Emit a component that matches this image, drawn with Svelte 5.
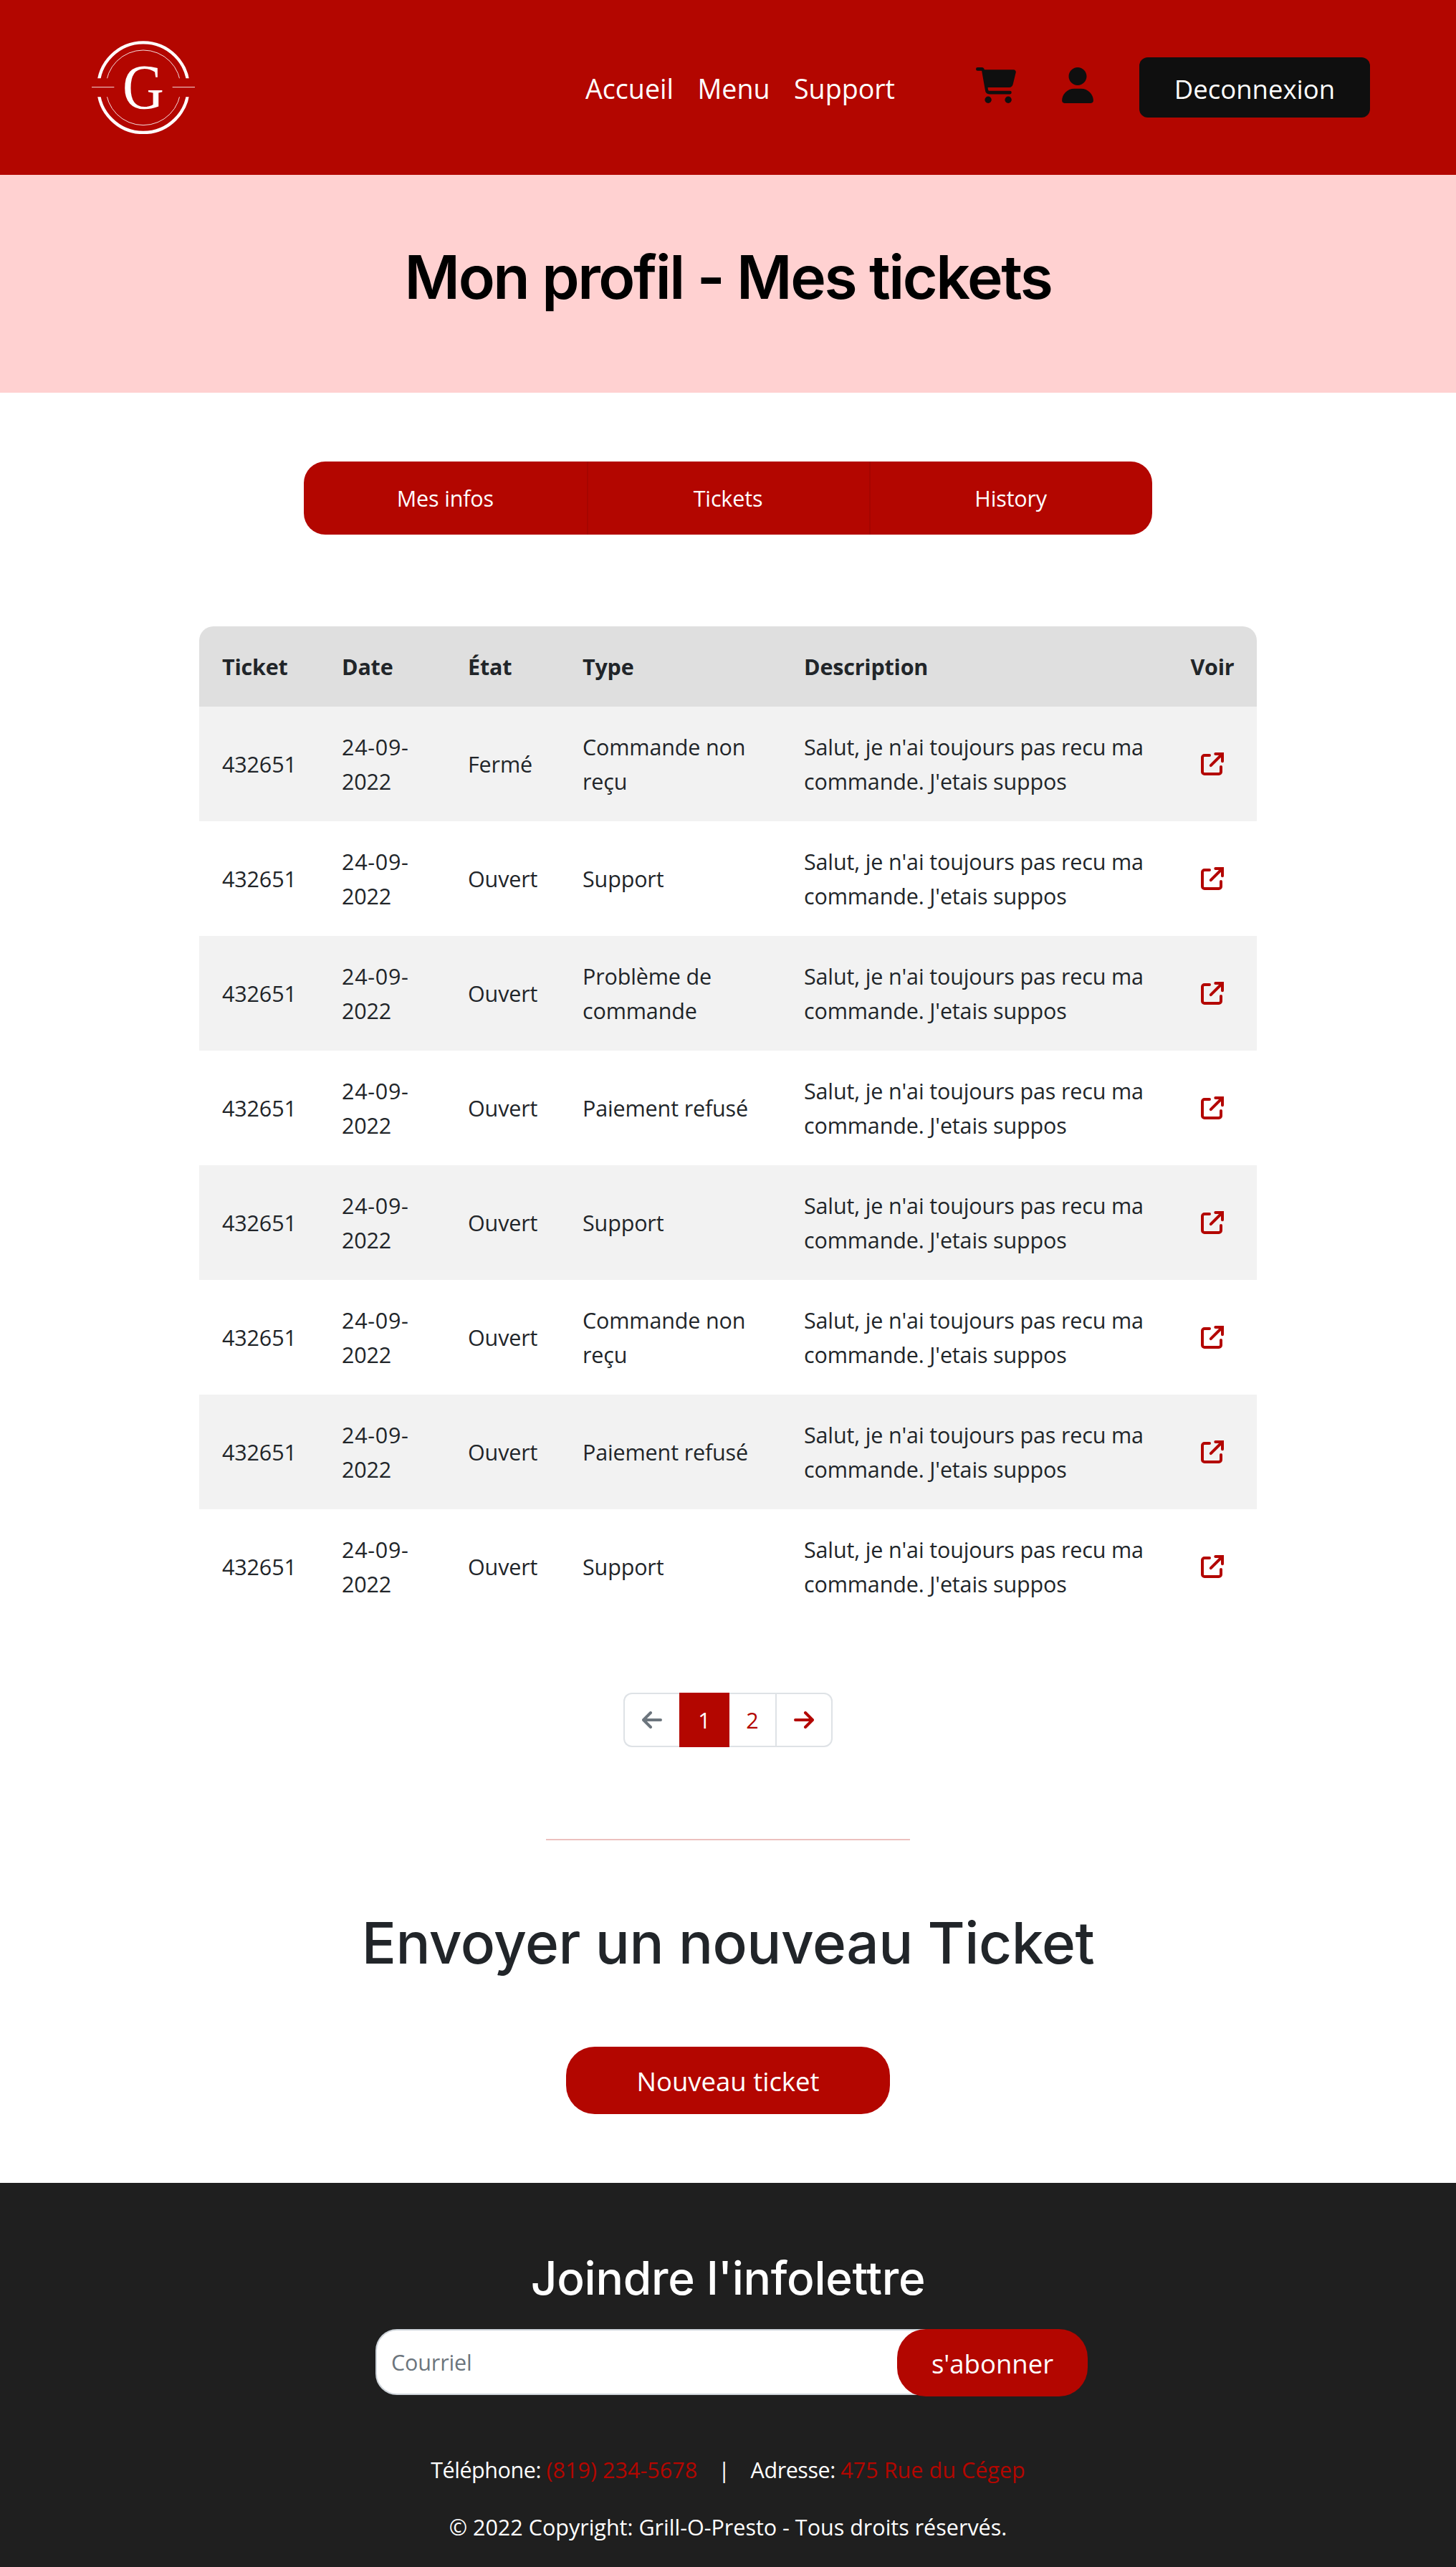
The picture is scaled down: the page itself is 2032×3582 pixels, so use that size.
<script>
  const nav = ['Accueil', 'Menu', 'Support'];
  const tabs = ['Mes infos', 'Tickets', 'History'];
  const description = "Salut, je n'ai toujours pas recu ma\ncommande. J'etais suppos";
  const tickets = [
    { state: 'Fermé', type: 'Commande non\nreçu' },
    { state: 'Ouvert', type: 'Support' },
    { state: 'Ouvert', type: 'Problème de\ncommande' },
    { state: 'Ouvert', type: 'Paiement refusé' },
    { state: 'Ouvert', type: 'Support' },
    { state: 'Ouvert', type: 'Commande non\nreçu' },
    { state: 'Ouvert', type: 'Paiement refusé' },
    { state: 'Ouvert', type: 'Support' }
  ].map((t) => ({ id: '432651', date: '24-09-\n2022', ...t }));
</script>

<header class="topbar">
  <svg class="logo" viewBox="84 80 432 391" aria-label="Grill-O-Presto">
    <defs>
      <clipPath id="ring-halves">
        <rect x="84" y="70" width="432" height="167" />
        <rect x="84" y="315" width="432" height="170" />
      </clipPath>
    </defs>
    <g clip-path="url(#ring-halves)" fill="none" stroke="#fff">
      <circle cx="300" cy="275.7" r="188.5" stroke-width="13" />
      <circle cx="300" cy="276" r="157" stroke-width="2.6" />
    </g>
    <path d="M84 274H178M422 274H516" stroke="#fff" stroke-width="2.6" />
    <text class="monogram" transform="translate(300 362) scale(.91 1)" text-anchor="middle">G</text>
  </svg>

  <nav class="links">
    {#each nav as item}<a href="#top">{item}</a>{/each}
  </nav>

  <svg class="cart" viewBox="0 0 576 512" aria-hidden="true">
    <path d="M24 0H86C103 0 116 10 122 32H541.8C562.1 32 578.3 52.2 572.6 72.7L532 240C524 268 506 288 478 288H170.7L174 318C176 330 184 336 196 336H488A24 24 0 0 1 488 384H196C158 384 138 362 134 334L84 50Q83 48 80 48H24A24 24 0 0 1 24 0Z" />
    <circle cx="176" cy="464" r="48" />
    <circle cx="464" cy="464" r="48" />
  </svg>
  <svg class="user" viewBox="0 0 448 512" aria-hidden="true">
    <path d="M224 256c70.7 0 128-57.31 128-128s-57.3-128-128-128C153.3 0 96 57.31 96 128S153.3 256 224 256zM274.7 304H173.3C77.61 304 0 381.6 0 477.3c0 19.14 15.52 34.67 34.66 34.67h378.7C432.5 512 448 496.5 448 477.3C448 381.6 370.4 304 274.7 304z" />
  </svg>
  <button class="logout">Deconnexion</button>
</header>

<section class="hero"><h1>Mon profil - Mes tickets</h1></section>

<main>
  <div class="tabs">
    {#each tabs as tab}<a href="#top">{tab}</a>{/each}
  </div>

  <table>
    <colgroup>
      <col class="c-id" /><col class="c-date" /><col class="c-state" /><col class="c-type" /><col class="c-desc" /><col class="c-view" />
    </colgroup>
    <thead>
      <tr><th>Ticket</th><th>Date</th><th>État</th><th>Type</th><th>Description</th><th class="view">Voir</th></tr>
    </thead>
    <tbody>
      {#each tickets as t}
        <tr>
          <td>{t.id}</td>
          <td class="date">{t.date}</td>
          <td>{t.state}</td>
          <td>{t.type}</td>
          <td>{description}</td>
          <td class="view">
            <svg class="open" viewBox="0 0 32 32" aria-hidden="true">
              <path d="M12 4H5a3 3 0 0 0-3 3V27a3 3 0 0 0 3 3H25a3 3 0 0 0 3-3V20" />
              <path d="M20.3 2H30V12.3" />
              <path d="M13.8 18.2 29 3" />
            </svg>
          </td>
        </tr>
      {/each}
    </tbody>
  </table>

  <div class="pager">
    <span class="page edge muted">
      <svg viewBox="0 0 28 24" aria-hidden="true"><path d="M26 12H2.4M12 2 2 12 12 22" /></svg>
    </span>
    <span class="page active">1</span>
    <span class="page two">2</span>
    <span class="page edge next">
      <svg viewBox="0 0 28 24" aria-hidden="true"><path d="M2 12H25.6M16 2 26 12 16 22" /></svg>
    </span>
  </div>

  <hr />
  <h2>Envoyer un nouveau Ticket</h2>
  <button class="pill new-ticket">Nouveau ticket</button>
</main>

<footer>
  <h3>Joindre l'infolettre</h3>
  <form class="newsletter">
    <input type="email" placeholder="Courriel" />
    <button class="pill subscribe" type="button">s'abonner</button>
  </form>
  <div class="contact">
    <span>Téléphone: <a href="#top">(819) 234-5678</a></span>
    <span class="bar">|</span>
    <span>Adresse: <a href="#top">475 Rue du Cégep</a></span>
  </div>
  <div class="copyright">© 2022 Copyright: Grill-O-Presto - Tous droits réservés.</div>
</footer>

<style>
  :global(body) {
    margin: 0;
    background: #fff;
    color: #212529;
    font: 400 30.5px/48px 'Open Sans', 'Noto Sans', sans-serif;
    letter-spacing: -0.15px;
  }
  a { color: inherit; text-decoration: none; }
  button { border: 0; font: inherit; letter-spacing: inherit; }
  h1, h2, h3 { margin: 0; font-family: Inter, sans-serif; font-weight: 500; white-space: nowrap; }
  svg { display: block; flex: none; }

  .topbar {
    box-sizing: border-box;
    display: flex;
    align-items: center;
    height: 244px;
    padding: 0 120px 0 128px;
    background: #b30600;
  }
  .logo { width: 144px; height: 130.3px; }
  .monogram { fill: #fff; font: 264px 'Liberation Serif', serif; letter-spacing: 0; }
  .links {
    display: flex;
    gap: 33.5px;
    margin: 3px 113px 0 auto;
    color: #fff;
    font-size: 37.6px;
    letter-spacing: 0;
  }
  .cart, .user { height: 50px; margin-bottom: 6px; fill: #0f0f0f; }
  .cart { width: 56px; }
  .user { width: 44px; margin-left: 64px; }
  .logout {
    width: 322px;
    height: 84px;
    margin-left: 64px;
    padding: 4px 0 0;
    border-radius: 12px;
    background: #0f0f0f;
    color: #fff;
    font-size: 36.5px;
    letter-spacing: 0;
  }

  .hero { box-sizing: border-box; height: 304px; padding-top: 93px; background: #ffd1d1; text-align: center; }
  h1 { color: #000; font-size: 84px; font-weight: 600; line-height: 100px; letter-spacing: -2.4px; }

  main { display: flex; flex-direction: column; align-items: center; padding: 96px 0; }
  .tabs {
    display: flex;
    width: 1184px;
    height: 102px;
    overflow: hidden;
    border-radius: 30px;
    background: #b30600;
    color: #fff;
  }
  .tabs a { flex: 1; text-align: center; line-height: 103px; }
  .tabs a + a { box-shadow: inset 2px 0 #a60500; }

  table {
    table-layout: fixed;
    width: 1476px;
    margin-top: 128px;
    border-spacing: 0;
    overflow: hidden;
    border-radius: 20px 20px 0 0;
  }
  .c-id { width: 167px; }
  .c-date { width: 176px; }
  .c-state { width: 160px; }
  .c-type { width: 309px; }
  .c-desc { width: 540px; }
  .c-view { width: 124px; }
  th, td { box-sizing: border-box; padding: 0 0 0 32px; text-align: left; white-space: pre; }
  th { height: 112px; background: #dfdfdf; font-weight: 700; letter-spacing: -0.2px; }
  td { height: 160px; }
  .date::first-line { letter-spacing: 0.7px; }
  tbody tr:nth-child(odd) { background: #f2f2f2; }
  .view { padding: 0; text-align: center; }
  .open { width: 32px; height: 32px; margin: 0 auto; fill: none; stroke: #b30600; stroke-width: 4; stroke-linecap: round; }

  .pager { display: flex; width: 292px; height: 76px; margin-top: 96px; color: #b30600; text-align: center; }
  .page {
    box-sizing: border-box;
    display: flex;
    align-items: center;
    justify-content: center;
    border: 2px solid #dee2e6;
    border-width: 2px 0;
  }
  .page svg { width: 28px; height: 24px; fill: none; stroke: currentColor; stroke-width: 4; stroke-linecap: round; stroke-linejoin: round; }
  .muted { width: 78px; color: #6c757d; border-left-width: 2px; border-radius: 12px 0 0 12px; }
  .active { width: 70px; border-color: #b30600; background: #b30600; color: #fff; }
  .two { width: 64px; }
  .next { width: 80px; border-width: 2px; border-radius: 0 12px 12px 0; }

  hr { width: 508px; height: 2px; margin: 128px 0 0; border: 0; background: #ecc1bf; }
  h2 { margin-top: 95px; font-size: 80px; line-height: 96px; letter-spacing: -0.5px; }
  .pill { height: 94px; padding: 1px 0 0; border-radius: 40px; background: #b30600; color: #fff; font-size: 36.5px; letter-spacing: 0; }
  .new-ticket { width: 452px; margin-top: 97px; }

  footer {
    box-sizing: border-box;
    display: flex;
    flex-direction: column;
    align-items: center;
    height: 536px;
    padding-top: 94px;
    background: #1f1f1f;
    color: #fff;
  }
  h3 { font-size: 64px; line-height: 77px; letter-spacing: -0.3px; }
  .newsletter { display: flex; width: 994px; margin: 33px 0 0 10px; }
  input {
    box-sizing: border-box;
    width: 768px;
    height: 92px;
    margin-right: -40px;
    padding: 0 20px;
    border: 2px solid #ced4da;
    border-radius: 30px 0 0 30px;
    background: #fff;
    font: inherit;
    letter-spacing: inherit;
  }
  input::placeholder { color: #6c757d; opacity: 1; }
  .subscribe { width: 266px; }
  .contact { display: flex; margin-top: 78px; white-space: pre; letter-spacing: -0.45px; }
  .contact a { color: #b30600; letter-spacing: 0.05px; }
  .bar { margin: 0 29px; }
  .copyright { margin-top: 32px; letter-spacing: 0; }
</style>
